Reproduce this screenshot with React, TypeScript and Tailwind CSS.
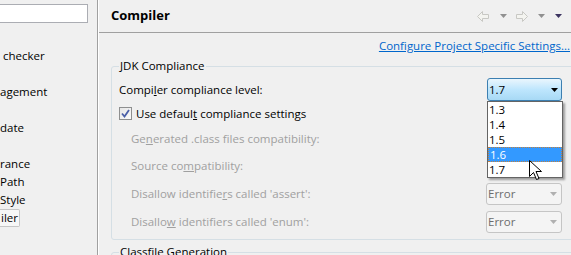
import React from "react";

const font = "font-['Segoe_UI','Open_Sans',sans-serif]";

function Tri({ className }: { className: string }) {
  return (
    <svg width="7" height="4" viewBox="0 0 7 4" className={className}>
      <path d="M0 0h7L3.5 4z" fill="currentColor" />
    </svg>
  );
}

function NavArrow({ flip }: { flip?: boolean }) {
  return (
    <svg width="12" height="11" viewBox="0 0 12 11" style={flip ? { transform: "scaleX(-1)" } : undefined}>
      <path d="M0.5 5.5L5.5 0.5V3.5H11.5V7.5H5.5V10.5Z" fill="#f4f4f0" stroke="#c8c8c4" strokeWidth="1" />
    </svg>
  );
}

function Cursor() {
  return (
    <svg width="13" height="20" viewBox="0 0 13 20" className="absolute left-[41px] top-[58px]">
      <path d="M0.5 0.5V16.5L4.5 12.5L7.5 19.5L10 18.5L7 11.5H12.5Z" fill="#fff" stroke="#000" strokeWidth="1" strokeLinejoin="round" />
    </svg>
  );
}

function ErrorCombo() {
  return (
    <div className="w-[76px] h-[22px] rounded-[3px] border border-[#c5c5c5] bg-[#f4f4f4] flex items-center justify-between pl-[1px] pr-[4px] text-[#6d6d6d]">
      <span>Error</span>
      <Tri className="text-[#b0b0b0]" />
    </div>
  );
}

const tree = ["", " checker", "", "agement", "", "date", "", "rance", "Path", "Style", "iler"];

export default function App() {
  return (
    <div className={`${font} text-[11.5px] w-[571px] h-[255px] overflow-hidden bg-[#f0f0f0] text-black flex`}>
      <aside className="w-[98px] shrink-0 border-r border-[#a0a0a0]">
        <div className="mt-[4px] w-[88px] h-[19px] bg-white border border-[#abadb3] border-l-0" />
        <div className="mt-[6px]">
          {tree.map((t, i) => (
            <div key={i} className="h-[18px] flex items-center leading-[16px] whitespace-pre">
              {t === "iler" ? (
                <span className="h-[18px] px-[1px] flex items-center bg-[#f7f7f7] border border-l-0 border-[#c6c6c6] rounded-r-[2px]">iler</span>
              ) : (
                t
              )}
            </div>
          ))}
        </div>
      </aside>
      <main className="flex-1 min-w-0 border-l border-white">
        <div className="h-[33px] border-b border-[#a0a0a0] flex items-center justify-between pl-[12px] pr-[9px]">
          <h1 className="text-[13px] font-bold">Compiler</h1>
          <div className="flex items-center">
            <NavArrow />
            <Tri className="ml-[11px] text-[#909090]" />
            <span className="ml-[9px] flex"><NavArrow flip /></span>
            <Tri className="ml-[10px] text-[#909090]" />
            <Tri className="ml-[10px] text-[#3c3460]" />
          </div>
        </div>
        <div className="h-[27px] flex items-center justify-end pr-[1px] pb-[1px]">
          <a className="text-[#0066cc] underline">Configure Project Specific Settings...</a>
        </div>
        <div className="relative ml-[12px] w-[463px] mt-[6px] border border-[#d5dfe5] rounded-[3px] pl-[7px] pr-[11px] pt-[11px] pb-[3px]">
          <span className="absolute -top-[9px] left-[7px] px-[1px] bg-[#f0f0f0] leading-[16px]">JDK Compliance</span>
          <div className="h-[23px] flex items-center justify-between">
            <span>
              Compi<u>l</u>er compliance level:
            </span>
            <div className="relative">
              <div className="w-[75px] h-[23px] rounded-[3px] border border-[#3c7fb1] bg-gradient-to-b from-[#eaf6fd] via-[#bee6fd] to-[#a7d9f5] flex items-center justify-between pl-[1px] pr-[3px]">
                <span>1.7</span>
                <Tri className="text-black" />
              </div>
              <div className="absolute left-0 top-[23px] w-[76px] bg-white border border-[#646464] shadow-[2px_2px_2px_rgba(0,0,0,0.35)] z-10 leading-[15px]">
                <div className="h-[15px] pl-[1px]">1.3</div>
                <div className="h-[15px] pl-[1px]">1.4</div>
                <div className="h-[15px] pl-[1px]">1.5</div>
                <div className="h-[15px] pl-[1px] bg-[#3399ff] text-white border border-dotted border-[#c08040] leading-[13px]">1.6</div>
                <div className="h-[15px] pl-[1px]">1.7</div>
                <Cursor />
              </div>
            </div>
          </div>
          <div className="h-[25px] flex items-center">
            <span className="w-[13px] h-[13px] border border-[#8e8f8f] bg-gradient-to-br from-[#e6e6e6] to-[#fafafa] flex items-center justify-center">
              <svg width="9" height="9" viewBox="0 0 9 9">
                <path d="M1 4.5L3.5 7.5L8 1" fill="none" stroke="#4a5fa8" strokeWidth="1.8" />
              </svg>
            </span>
            <span className="ml-[4px]">
              Use defaul<u>t</u> compliance settings
            </span>
          </div>
          <div className="h-[26px] flex items-center pl-[12px] text-[#a0a0a0]">
            <span>
              Ge<u>n</u>erated .class files compatibility:
            </span>
          </div>
          <div className="h-[28px] flex items-center pl-[12px] text-[#a0a0a0]">
            <span>
              Source co<u>m</u>patibility:
            </span>
          </div>
          <div className="h-[28px] flex items-center justify-between pl-[12px] text-[#a0a0a0]">
            <span>
              Disallow identifie<u>r</u>s called 'assert':
            </span>
            <ErrorCombo />
          </div>
          <div className="h-[28px] flex items-center justify-between pl-[12px] text-[#a0a0a0]">
            <span>
              Disallo<u>w</u> identifiers called 'enum':
            </span>
            <ErrorCombo />
          </div>
        </div>
        <div className="relative ml-[12px] w-[463px] mt-[12px] border border-[#d5dfe5] rounded-[3px] h-[40px]">
          <span className="absolute -top-[9px] left-[7px] px-[1px] bg-[#f0f0f0] leading-[16px]">Classfile Generation</span>
        </div>
      </main>
    </div>
  );
}
